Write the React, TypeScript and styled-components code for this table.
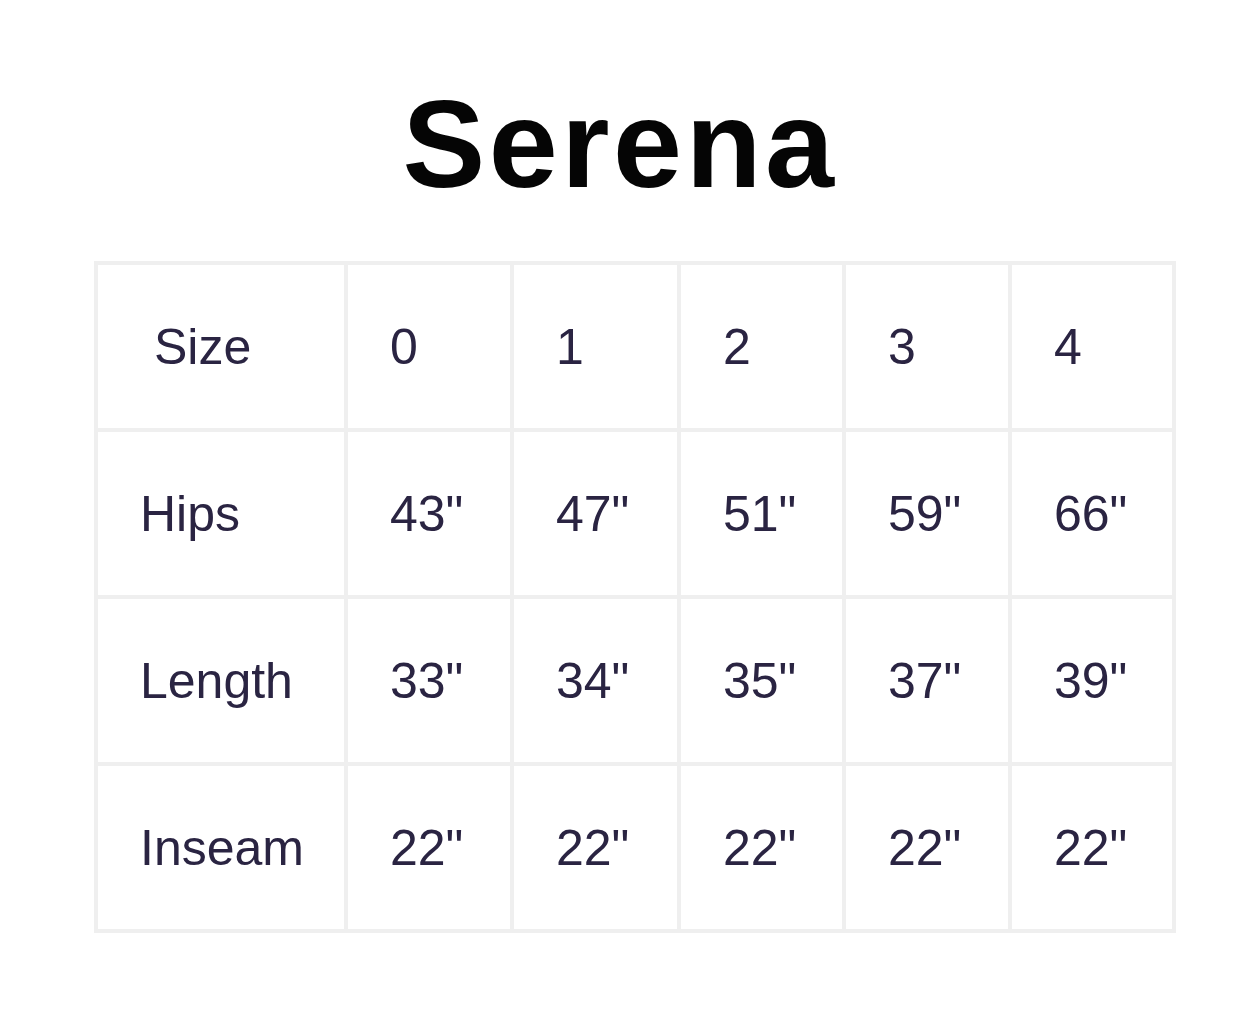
import React from "react";
import styled, { createGlobalStyle } from "styled-components";

const Global = createGlobalStyle`
  html, body { margin: 0; padding: 0; background: #ffffff; }
  body { font-family: "Liberation Sans", Arial, sans-serif; }
`;

const Page = styled.div`
  width: 1242px;
  height: 1012px;
  display: flex;
  flex-direction: column;
  align-items: flex-start;
  overflow: hidden;
`;

const Title = styled.h1`
  margin: 82px 0 0 0;
  align-self: center;
  font-family: "Liberation Sans", Arial, sans-serif;
  font-weight: 700;
  font-size: 124px;
  line-height: 124px;
  letter-spacing: 3.6px;
  color: #050505;
  transform: translateX(-1px);
`;

const Grid = styled.div`
  margin: 55px 0 0 94px;
  display: grid;
  grid-template-columns: 246px 162px 163px 161px 162px 160px;
  grid-auto-rows: 163px;
  gap: 4px;
  padding: 4px;
  background: #efefef;
`;

const Cell = styled.div<{ $indent?: number }>`
  background: #ffffff;
  display: flex;
  align-items: center;
  padding-left: ${(p) => 42 + (p.$indent ?? 0)}px;
  font-family: "Liberation Sans", Arial, sans-serif;
  font-size: 50px;
  color: #2a2442;
  white-space: pre;
`;

const rows: { label: string; indent?: number; values: string[] }[] = [
  { label: "Size", indent: 14, values: ["0", "1", "2", "3", "4"] },
  { label: "Hips", values: ['43"', '47"', '51"', '59"', '66"'] },
  { label: "Length", values: ['33"', '34"', '35"', '37"', '39"'] },
  { label: "Inseam", values: ['22"', '22"', '22"', '22"', '22"'] },
];

export default function App() {
  return (
    <>
      <Global />
      <Page>
        <Title>Serena</Title>
        <Grid>
          {rows.map((r) => (
            <React.Fragment key={r.label}>
              <Cell $indent={r.indent}>{r.label}</Cell>
              {r.values.map((v, i) => (
                <Cell key={i}>{v}</Cell>
              ))}
            </React.Fragment>
          ))}
        </Grid>
      </Page>
    </>
  );
}
